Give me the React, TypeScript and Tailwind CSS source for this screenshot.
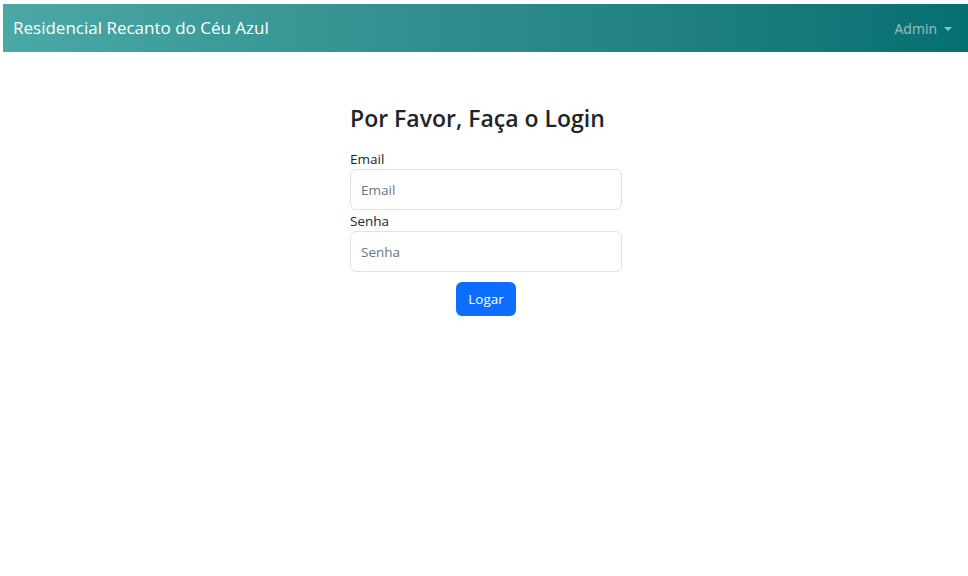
import React from 'react';

const App: React.FC = () => {
  return (
    <div className="min-h-screen bg-white pl-[3px] pt-[4px] font-['Open_Sans',sans-serif] text-[#212529]">
      <nav className="flex h-[48px] items-center justify-between bg-gradient-to-r from-[#4aa8a6] to-[#046f71] pl-[10px] pr-[16px]">
        <span className="text-[17px] text-white">Residencial Recanto do Céu Azul</span>
        <button className="flex items-center gap-[7px] text-[14px] text-white/55">
          Admin
          <span className="mt-[2px] h-0 w-0 border-x-[4px] border-t-[4px] border-x-transparent border-t-white/55" />
        </button>
      </nav>

      <div className="mx-auto mt-[50px] w-[273px] pl-[1px]">
        <h1 className="text-[23px] font-semibold leading-[32px]">Por Favor, Faça o Login</h1>
        <form className="mt-[16px] flex flex-col" onSubmit={e => e.preventDefault()}>
          <label className="text-[13.5px] leading-[18px]">Email</label>
          <input
            placeholder="Email"
            className="mt-[1px] h-[41px] rounded-[6px] border border-[#dee2e6] px-[10px] text-[13.5px] placeholder:text-[#6c757d]"
          />
          <label className="mt-[2px] text-[13.5px] leading-[18px]">Senha</label>
          <input
            type="password"
            placeholder="Senha"
            className="mt-[1px] h-[41px] rounded-[6px] border border-[#dee2e6] px-[10px] text-[13.5px] placeholder:text-[#6c757d]"
          />
          <button className="mx-auto mt-[10px] h-[34px] w-[60px] rounded-[6px] bg-[#0d6efd] text-[13.5px] text-white">
            Logar
          </button>
        </form>
      </div>
    </div>
  );
};

export default App;
